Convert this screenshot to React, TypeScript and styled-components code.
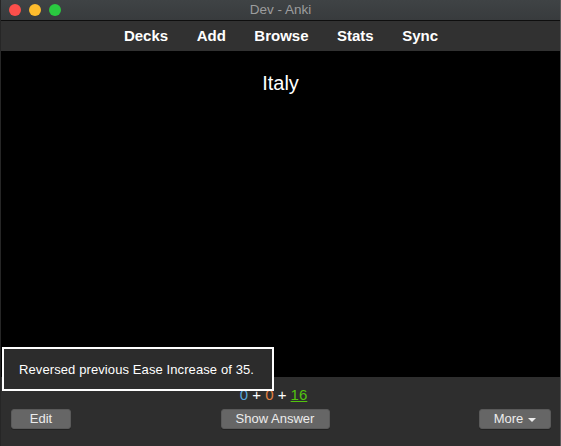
import React from "react";
import styled, { createGlobalStyle } from "styled-components";

const Global = createGlobalStyle`
  html, body { margin: 0; padding: 0; background: #000; }
  body { font-family: "Liberation Sans", Arial, Helvetica, sans-serif; overflow: hidden; }
`;

const Window = styled.div`
  position: relative;
  width: 561px;
  height: 446px;
  display: flex;
  flex-direction: column;
  background: #2f2f2f;
  box-sizing: border-box;
  border-right: 1px solid #5a5a5a;
  border-left: 1px solid #262626;
  overflow: hidden;
`;

const TitleBar = styled.div`
  position: relative;
  height: 20px;
  flex: none;
  background: linear-gradient(#3f4345, #383b3d);
  border-bottom: 1px solid #0e0e0e;
  display: flex;
  align-items: center;
  justify-content: center;
`;

const Lights = styled.div`
  position: absolute;
  left: 8px;
  top: 4px;
  display: flex;
  gap: 8px;
`;

const Light = styled.span<{ $c: string }>`
  width: 12px;
  height: 12px;
  border-radius: 50%;
  background: ${(p) => p.$c};
`;

const Title = styled.div`
  color: #9c9d9e;
  font-size: 13.5px;
  line-height: 20px;
`;

const Toolbar = styled.nav`
  height: 30px;
  flex: none;
  background: #313131;
  display: flex;
  justify-content: center;
  align-items: center;
  gap: 28.5px;
  padding-left: 1px;
`;

const NavItem = styled.span`
  color: #fff;
  font-weight: bold;
  font-size: 15px;
  line-height: 30px;
`;

const Content = styled.main`
  flex: 1;
  background: #000;
  display: flex;
  justify-content: center;
  align-items: flex-start;
  padding-top: 20px;
  box-sizing: border-box;
`;

const Question = styled.div`
  color: #fff;
  font-size: 20px;
  line-height: 24px;
`;

const Bottom = styled.footer`
  height: 69px;
  flex: none;
  background: #2e2e2e;
  display: flex;
  flex-direction: column;
  align-items: center;
  box-sizing: border-box;
  padding: 9px 9px 0 10px;
`;

const Counts = styled.div`
  color: #fff;
  font-size: 15px;
  line-height: 18px;
  height: 19px;
  margin-right: 15px;
`;

const Count = styled.span<{ $c: string; $u?: boolean }>`
  color: ${(p) => p.$c};
  text-decoration: ${(p) => (p.$u ? "underline" : "none")};
`;

const ButtonRow = styled.div`
  align-self: stretch;
  display: flex;
  justify-content: space-between;
  align-items: center;
  margin-top: 4px;
`;

const Button = styled.button<{ $w: number }>`
  width: ${(p) => p.$w}px;
  height: 20px;
  padding: 0;
  background: #666;
  border: 1px solid #5a5a5a;
  border-radius: 3px;
  color: #ececec;
  font-family: "Liberation Sans", Arial, sans-serif;
  font-size: 13px;
  line-height: 18px;
  display: flex;
  align-items: center;
  justify-content: center;
  gap: 5px;
  box-shadow: 0 1px 0 rgba(0,0,0,0.25);
`;

const Caret = styled.span`
  width: 0;
  height: 0;
  border-left: 4px solid transparent;
  border-right: 4px solid transparent;
  border-top: 4px solid #ececec;
  margin-top: 1px;
`;

const Toast = styled.div`
  position: absolute;
  left: 1px;
  top: 347px;
  width: 272px;
  height: 44px;
  box-sizing: border-box;
  border: 2px solid #fff;
  background: #2c2c2c;
  color: #fff;
  font-size: 13px;
  letter-spacing: 0.1px;
  display: flex;
  align-items: center;
  padding-left: 15px;
`;

export default function App() {
  return (
    <>
      <Global />
      <Window>
        <TitleBar>
          <Lights>
            <Light $c="#fc4f4b" />
            <Light $c="#fdbc2d" />
            <Light $c="#2ac940" />
          </Lights>
          <Title>Dev - Anki</Title>
        </TitleBar>
        <Toolbar>
          <NavItem>Decks</NavItem>
          <NavItem>Add</NavItem>
          <NavItem>Browse</NavItem>
          <NavItem>Stats</NavItem>
          <NavItem>Sync</NavItem>
        </Toolbar>
        <Content>
          <Question>Italy</Question>
        </Content>
        <Bottom>
          <Counts>
            <Count $c="#56a6dc">0</Count> + <Count $c="#e2803f">0</Count> +{" "}
            <Count $c="#52c40e" $u>16</Count>
          </Counts>
          <ButtonRow>
            <Button $w={60}>Edit</Button>
            <Button $w={109}>Show Answer</Button>
            <Button $w={72}>
              More <Caret />
            </Button>
          </ButtonRow>
        </Bottom>
        <Toast>Reversed previous Ease Increase of 35.</Toast>
      </Window>
    </>
  );
}
